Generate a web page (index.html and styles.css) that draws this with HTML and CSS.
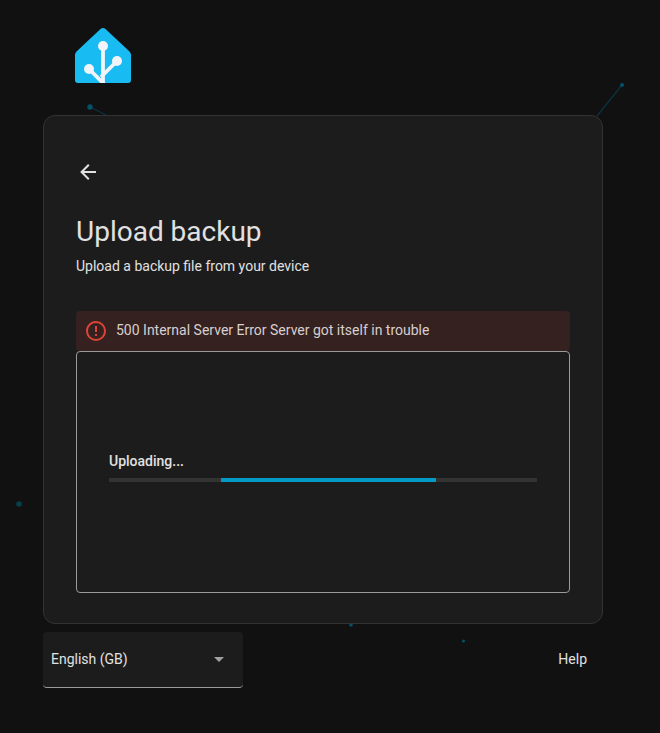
FILE: index.html
```html
<!DOCTYPE html>
<html lang="en">
<head>
<meta charset="utf-8">
<title>Upload backup</title>
<link rel="stylesheet" href="styles.css">
</head>
<body>
<svg class="bg" width="660" height="733" viewBox="0 0 660 733" aria-hidden="true">
  <line class="bg-line" x1="90" y1="107" x2="106" y2="115"/>
  <line class="bg-line" x1="622" y1="85" x2="597" y2="116"/>
  <circle class="bg-dot" cx="90" cy="107" r="2.7"/>
  <circle class="bg-dot" cx="622" cy="85" r="2"/>
  <circle class="bg-dot dim" cx="19" cy="504" r="2.7"/>
  <circle class="bg-dot" cx="351" cy="625" r="1.8"/>
  <circle class="bg-dot" cx="463.500" cy="641" r="1.500"/>
</svg>
<main class="page">
  <svg class="logo" width="56" height="55" viewBox="0 0 56 55" aria-label="Home Assistant">
    <path class="logo-house" d="M0 27 Q0 25 1.500 23.500 L25.500 1 Q28 -1 30.500 1 L54.500 23.500 Q56 25 56 27 L56 52 Q56 55 53 55 L3 55 Q0 55 0 52 Z"/>
    <path class="logo-tree" d="M28 18V57M14 41L30 57M42 33L26 49"/>
    <circle class="logo-node" cx="28" cy="18" r="5"/>
    <circle class="logo-node" cx="14" cy="41" r="5"/>
    <circle class="logo-node" cx="42" cy="33" r="5"/>
  </svg>
  <section class="card">
    <button class="back" type="button" aria-label="Back">
      <svg width="24" height="24" viewBox="0 0 24 24"><path d="M20 11V13H8L13.500 18.500L12.080 19.920L4.160 12L12.080 4.080L13.500 5.500L8 11H20Z"/></svg>
    </button>
    <h1 class="title">Upload backup</h1>
    <p class="subtitle">Upload a backup file from your device</p>
    <div class="alert">
      <svg class="alert-icon" width="24" height="24" viewBox="0 0 24 24"><path d="M11 15H13V17H11V15M11 7H13V13H11V7M12 2C6.470 2 2 6.500 2 12A10 10 0 0 0 12 22A10 10 0 0 0 22 12A10 10 0 0 0 12 2M12 20A8 8 0 0 1 4 12A8 8 0 0 1 12 4A8 8 0 0 1 20 12A8 8 0 0 1 12 20Z"/></svg>
      <span>500 Internal Server Error Server got itself in trouble</span>
    </div>
    <div class="upload">
      <div class="upload-label">Uploading...</div>
      <div class="progress"><div class="progress-bar"></div></div>
    </div>
  </section>
  <footer class="footer">
    <div class="select">
      <span>English (GB)</span>
      <span class="caret"></span>
    </div>
    <a class="help">Help</a>
  </footer>
</main>
</body>
</html>
```
FILE: styles.css
```css
* { box-sizing: border-box; }
html, body { margin: 0; height: 100%; }
body {
  background: #111111;
  color: #e1e1e1;
  font-family: Roboto, "Noto Sans", sans-serif;
  overflow: hidden;
  position: relative;
}
.bg { position: absolute; left: 0; top: 0; }
.bg-line { stroke: #0b3441; stroke-width: 1.200; }
.bg-dot { fill: #06516a; }
.bg-dot.dim { fill: #06414f; }
.page {
  position: relative;
  width: 560px;
  margin-left: 43px;
  padding-top: 28px;
}
.logo { display: block; margin-left: 32px; margin-bottom: 32px; }
.logo-house { fill: #18bcf2; }
.logo-tree { fill: none; stroke: #f2f4f9; stroke-width: 3.800; }
.logo-node { fill: #f2f4f9; }
.card {
  height: 509px;
  background: #1c1c1c;
  border: 1px solid #333333;
  border-radius: 12px;
  padding: 32px;
}
.back {
  display: flex;
  align-items: center;
  justify-content: center;
  width: 48px;
  height: 48px;
  margin-left: -12px;
  padding: 0;
  border: 0;
  background: none;
}
.back svg { fill: #e1e1e1; }
.title {
  margin: 18px 0 0;
  font-size: 28px;
  font-weight: 400;
  line-height: 36px;
  color: #e1e1e1;
}
.subtitle {
  margin: 6px 0 0;
  font-size: 14px;
  font-weight: 400;
  line-height: 20px;
  color: #e1e1e1;
}
.alert {
  display: flex;
  align-items: center;
  gap: 8px;
  height: 40px;
  margin-top: 35px;
  padding: 0 8px;
  background: #352120;
  border-radius: 4px;
  font-size: 14px;
  font-weight: 400;
  color: #d8cfcf;
}
.alert span { padding-bottom: 2px; }
.alert-icon { fill: #db4437; flex: none; }
.upload {
  display: flex;
  flex-direction: column;
  justify-content: center;
  height: 242px;
  padding: 0 32px 11px;
  border: 1px solid #9a9a9a;
  border-radius: 4px;
}
.upload-label {
  font-size: 14px;
  font-weight: 500;
  line-height: 20px;
  color: #e1e1e1;
  margin-bottom: 7px;
}
.progress {
  height: 4px;
  background: #333333;
}
.progress-bar {
  width: 50.200%;
  height: 100%;
  margin-left: 26.200%;
  background: #039bc5;
}
.footer {
  display: flex;
  align-items: center;
  justify-content: space-between;
  margin-top: 8px;
}
.select {
  display: flex;
  align-items: center;
  justify-content: space-between;
  width: 200px;
  height: 56px;
  padding: 0 19px 0 8px;
  background: #1c1c1c;
  border-bottom: 1px solid #9a9a9a;
  border-radius: 4px;
  font-size: 14px;
  font-weight: 400;
  color: #e1e1e1;
}
.select span:first-child { padding-bottom: 2px; }
.caret {
  width: 0;
  height: 0;
  border-left: 5px solid transparent;
  border-right: 5px solid transparent;
  border-top: 5px solid #a0a0a0;
}
.help {
  margin-right: 16px;
  padding-bottom: 2px;
  font-size: 14px;
  font-weight: 400;
  color: #e1e1e1;
}
```
